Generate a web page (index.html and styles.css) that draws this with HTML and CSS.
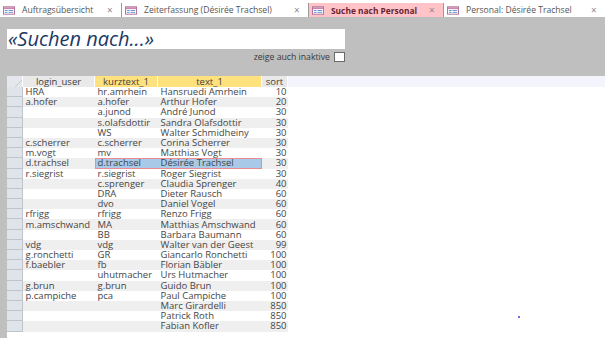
FILE: index.html
```html
<!DOCTYPE html>
<html lang="de">
<head>
    <meta charset="UTF-8">
    <title>Suche nach Personal</title>
    <link rel="stylesheet" href="styles.css">
</head>
<body>

<div class="tabbar">
    <div class="tab tab-1">
        <svg class="tab-icon" viewBox="0 0 13 9"><rect x="0.5" y="0.5" width="12" height="8" fill="#fff" stroke="#b06b93"/><rect x="1" y="1" width="11" height="2" fill="#c987ae"/><rect x="2" y="4" width="3" height="1" fill="#5b8fd1"/><rect x="6" y="4" width="5" height="1" fill="#5b8fd1"/><rect x="2" y="6" width="3" height="1" fill="#5b8fd1"/><rect x="6" y="6" width="5" height="1" fill="#5b8fd1"/></svg>
        <span class="tab-label">Auftragsübersicht</span>
        <span class="tab-close">×</span>
    </div>
    <div class="tab tab-2">
        <svg class="tab-icon" viewBox="0 0 13 9"><rect x="0.5" y="0.5" width="12" height="8" fill="#fff" stroke="#b06b93"/><rect x="1" y="1" width="11" height="2" fill="#c987ae"/><rect x="2" y="4" width="3" height="1" fill="#5b8fd1"/><rect x="6" y="4" width="5" height="1" fill="#5b8fd1"/><rect x="2" y="6" width="3" height="1" fill="#5b8fd1"/><rect x="6" y="6" width="5" height="1" fill="#5b8fd1"/></svg>
        <span class="tab-label">Zeiterfassung (Désirée Trachsel)</span>
        <span class="tab-close">×</span>
    </div>
    <div class="tab tab-3 active">
        <svg class="tab-icon" viewBox="0 0 13 9"><rect x="0.5" y="0.5" width="12" height="8" fill="#fff" stroke="#b06b93"/><rect x="1" y="1" width="11" height="2" fill="#c987ae"/><rect x="2" y="4" width="3" height="1" fill="#5b8fd1"/><rect x="6" y="4" width="5" height="1" fill="#5b8fd1"/><rect x="2" y="6" width="3" height="1" fill="#5b8fd1"/><rect x="6" y="6" width="5" height="1" fill="#5b8fd1"/></svg>
        <span class="tab-label">Suche nach Personal</span>
        <span class="tab-close">×</span>
    </div>
    <div class="tab tab-4">
        <svg class="tab-icon" viewBox="0 0 13 9"><rect x="0.5" y="0.5" width="12" height="8" fill="#fff" stroke="#b06b93"/><rect x="1" y="1" width="11" height="2" fill="#c987ae"/><rect x="2" y="4" width="3" height="1" fill="#5b8fd1"/><rect x="6" y="4" width="5" height="1" fill="#5b8fd1"/><rect x="2" y="6" width="3" height="1" fill="#5b8fd1"/><rect x="6" y="6" width="5" height="1" fill="#5b8fd1"/></svg>
        <span class="tab-label">Personal: Désirée Trachsel</span>
        <span class="tab-close">×</span>
    </div>
</div>

<div class="form-header">
    <div class="search-box">«Suchen nach...»</div>
    <div class="option-row">
        <span>zeige auch inaktive</span>
        <span class="checkbox"></span>
    </div>
</div>

<div class="sheet-area">
    <div class="sheet-gutter"></div>
    <div class="sheet">
        <table class="grid">
            <thead>
                <tr>
                    <th class="sel corner"></th>
                    <th class="col-login">login_user</th>
                    <th class="col-kurz hl">kurztext_1</th>
                    <th class="col-text hl">text_1</th>
                    <th class="col-sort">sort</th>
                    <th class="col-rest"></th>
                </tr>
            </thead>
            <tbody>
                <tr><td class="sel"></td><td>HRA</td><td>hr.amrhein</td><td>Hansruedi Amrhein</td><td class="num">10</td><td class="rest"></td></tr>
                <tr><td class="sel"></td><td>a.hofer</td><td>a.hofer</td><td>Arthur Hofer</td><td class="num">20</td><td class="rest"></td></tr>
                <tr><td class="sel"></td><td></td><td>a.junod</td><td>André Junod</td><td class="num">30</td><td class="rest"></td></tr>
                <tr><td class="sel"></td><td></td><td>s.olafsdottir</td><td>Sandra Olafsdottir</td><td class="num">30</td><td class="rest"></td></tr>
                <tr><td class="sel"></td><td></td><td>WS</td><td>Walter Schmidheiny</td><td class="num">30</td><td class="rest"></td></tr>
                <tr><td class="sel"></td><td>c.scherrer</td><td>c.scherrer</td><td>Corina Scherrer</td><td class="num">30</td><td class="rest"></td></tr>
                <tr><td class="sel"></td><td>m.vogt</td><td>mv</td><td>Matthias Vogt</td><td class="num">30</td><td class="rest"></td></tr>
                <tr class="current"><td class="sel"></td><td>d.trachsel</td><td class="pick pick-left">d.trachsel</td><td class="pick pick-right">Désirée Trachsel</td><td class="num">30</td><td class="rest"></td></tr>
                <tr><td class="sel"></td><td>r.siegrist</td><td>r.siegrist</td><td>Roger Siegrist</td><td class="num">30</td><td class="rest"></td></tr>
                <tr><td class="sel"></td><td></td><td>c.sprenger</td><td>Claudia Sprenger</td><td class="num">40</td><td class="rest"></td></tr>
                <tr><td class="sel"></td><td></td><td>DRA</td><td>Dieter Rausch</td><td class="num">60</td><td class="rest"></td></tr>
                <tr><td class="sel"></td><td></td><td>dvo</td><td>Daniel Vogel</td><td class="num">60</td><td class="rest"></td></tr>
                <tr><td class="sel"></td><td>rfrigg</td><td>rfrigg</td><td>Renzo Frigg</td><td class="num">60</td><td class="rest"></td></tr>
                <tr><td class="sel"></td><td>m.amschwand</td><td>MA</td><td>Matthias Amschwand</td><td class="num">60</td><td class="rest"></td></tr>
                <tr><td class="sel"></td><td></td><td>BB</td><td>Barbara Baumann</td><td class="num">60</td><td class="rest"></td></tr>
                <tr><td class="sel"></td><td>vdg</td><td>vdg</td><td>Walter van der Geest</td><td class="num">99</td><td class="rest"></td></tr>
                <tr><td class="sel"></td><td>g.ronchetti</td><td>GR</td><td>Giancarlo Ronchetti</td><td class="num">100</td><td class="rest"></td></tr>
                <tr><td class="sel"></td><td>f.baebler</td><td>fb</td><td>Florian Bäbler</td><td class="num">100</td><td class="rest"></td></tr>
                <tr><td class="sel"></td><td></td><td>uhutmacher</td><td>Urs Hutmacher</td><td class="num">100</td><td class="rest"></td></tr>
                <tr><td class="sel"></td><td>g.brun</td><td>g.brun</td><td>Guido Brun</td><td class="num">100</td><td class="rest"></td></tr>
                <tr><td class="sel"></td><td>p.campiche</td><td>pca</td><td>Paul Campiche</td><td class="num">100</td><td class="rest"></td></tr>
                <tr><td class="sel"></td><td></td><td></td><td>Marc Girardelli</td><td class="num">850</td><td class="rest"></td></tr>
                <tr><td class="sel"></td><td></td><td></td><td>Patrick Roth</td><td class="num">850</td><td class="rest"></td></tr>
                <tr><td class="sel"></td><td></td><td></td><td>Fabian Kofler</td><td class="num">850</td><td class="rest"></td></tr>
            </tbody>
        </table>
        <span class="stray-dot"></span>
    </div>
</div>

</body>
</html>
```

FILE: styles.css
```css
body {
    font-family: "Open Sans", "Noto Sans", sans-serif;
    margin: 0;
    padding: 0;
    width: 605px;
    height: 338px;
    overflow: hidden;
    background-color: #fff;
}
.tabbar {
    display: flex;
    height: 14px;
    padding-top: 3px;
    background-color: #fff;
}
.tab {
    display: flex;
    align-items: center;
    height: 14px;
    padding: 0 0 0 3px;
    box-sizing: border-box;
    border-right: 1px solid #9a9a9a;
    font-size: 8.6px;
    color: #555;
}
.tab-1 { width: 122px; }
.tab-2 { width: 187px; }
.tab-3 { width: 135px; }
.tab-4 { width: 161px; border-right: none; }
.tab.active {
    background-color: #ffc3c8;
    color: #6a2430;
    font-weight: bold;
}
.tab.active .tab-label {
    font-size: 8.4px;
}
.tab-icon {
    width: 12px;
    height: 9px;
    flex: none;
}
.tab-label {
    margin-left: 7px;
    flex: 1;
    white-space: nowrap;
}
.tab-close {
    width: 14px;
    font-size: 10px;
    font-weight: normal;
    color: #8a8a8a;
}
.form-header {
    background-color: #bfbfbf;
    height: 59px;
    padding: 12px 0 0 7px;
    box-sizing: border-box;
}
.search-box {
    width: 338px;
    height: 20px;
    background-color: #fff;
    font-style: italic;
    font-size: 20px;
    line-height: 20px;
    color: #203864;
    padding-left: 1px;
    box-sizing: border-box;
}
.option-row {
    display: flex;
    justify-content: flex-end;
    align-items: center;
    width: 338px;
    height: 12px;
    margin-top: 2px;
    font-size: 8.7px;
    color: #383838;
}
.checkbox {
    width: 9px;
    height: 8px;
    margin-left: 4px;
    border: 1px solid #6a6a6a;
    background-color: #fff;
}
.sheet-area {
    display: flex;
    height: 262px;
}
.sheet-gutter {
    width: 7px;
    background-color: #bfbfbf;
}
.sheet {
    position: relative;
    flex: 1;
}
.grid {
    border-collapse: collapse;
    table-layout: fixed;
    width: 598px;
    font-size: 9.5px;
    color: #454545;
}
.grid th {
    height: 11px;
    padding: 0;
    font-weight: normal;
    background-color: #e9e9e9;
    border-right: 1px solid #fff;
    color: #404040;
    line-height: 11px;
}
.grid th.hl {
    background-color: #ffe27e;
}
.grid th.col-rest {
    background-color: #f4f5fc;
    border-right: none;
}
.grid tbody tr {
    height: 10.2px;
}
.grid td {
    height: 10.2px;
    padding: 0 0 0 3px;
    line-height: 10px;
    white-space: nowrap;
}
.grid tbody tr:nth-child(even) td {
    background-color: #efefef;
}
.grid td.rest,
.grid tbody tr:nth-child(even) td.rest {
    background-color: #fff;
}
.sel {
    width: 15px;
}
.col-login { width: 71px; }
.col-kurz { width: 62px; }
.col-text { width: 103px; }
.col-sort { width: 25px; }
.grid td.sel,
.grid tbody tr:nth-child(even) td.sel {
    background-color: #dfe3ea;
    box-shadow: inset -1px -1px 0 #bfc4cc;
    padding: 0;
}
.grid th.corner {
    background-color: #e4e7ec;
    background-image: linear-gradient(135deg, transparent 70%, #c8ccd2 70%, #c8ccd2 76%, transparent 76%);
}
.grid td.num {
    text-align: right;
    padding: 0 1px 0 0;
}
.grid tr.current td.sel {
    background-color: #ffd966;
}
.grid tr.current td.pick {
    background-color: #a8c9e8;
}
.grid tr.current td.pick-left {
    box-shadow: inset 1px 1px 0 #ea8d92, inset 0 -1px 0 #ea8d92;
}
.grid tr.current td.pick-right {
    box-shadow: inset -1px 1px 0 #ea8d92, inset 0 -1px 0 #ea8d92;
}
.stray-dot {
    position: absolute;
    left: 511px;
    top: 240px;
    width: 2px;
    height: 2px;
    background-color: #6a6af0;
}
```
